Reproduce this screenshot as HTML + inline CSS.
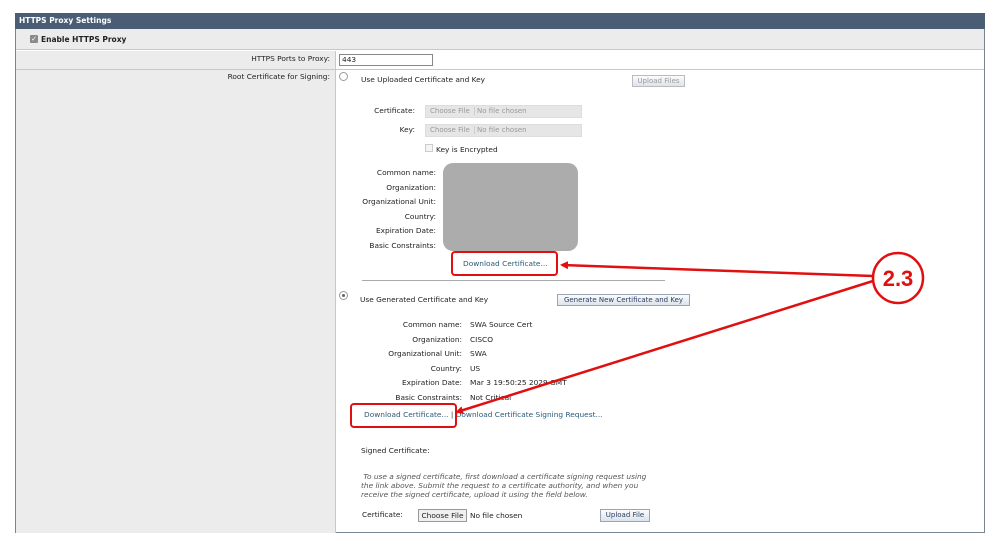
<!DOCTYPE html>
<html><head><meta charset="utf-8"><style>
*{margin:0;padding:0;box-sizing:border-box}
body{width:999px;height:543px;background:#fff;position:relative;font-family:"DejaVu Sans","Liberation Sans",sans-serif;font-size:7.4px;color:#222;overflow:hidden}
.a{position:absolute;white-space:nowrap}
.r{text-align:right}
.lnk{color:#2a5a78}
.fb{position:absolute;height:13px;background:#e6e6e6;border:1px solid #ddd;color:#999;font-size:7px;line-height:11px}
.btn{position:absolute;height:12px;border:1px solid #9aa4b4;background:linear-gradient(#fafbfd,#dde3ec);font-size:7px;line-height:10px;text-align:center;color:#2a3f5f}
</style></head><body>
<div class="a" style="left:15px;top:13px;width:970px;height:520px;border:1px solid #7a8594;border-top:none"></div>
<div class="a" style="left:15px;top:13px;width:970px;height:16px;background:#4a5d75;color:#fff;font-weight:bold;font-size:7.5px;line-height:16px;padding-left:4px">HTTPS Proxy Settings</div>
<div class="a" style="left:16px;top:29px;width:968px;height:21px;background:#ececec;border-bottom:1px solid #c8c8c8"></div>
<div class="a" style="left:30px;top:35px;width:8px;height:8px;background:#8a8a8a;border-radius:1px;color:#fff;font-size:7px;line-height:8px;text-align:center">✓</div>
<div class="a" style="left:41px;top:35px;font-weight:bold;font-size:7.5px">Enable HTTPS Proxy</div>
<div class="a" style="left:16px;top:51px;width:319px;height:482px;background:#ececec"></div>
<div class="a" style="left:335px;top:51px;width:1px;height:482px;background:#c8c8c8"></div>
<div class="a" style="left:16px;top:69px;width:968px;height:1px;background:#c8c8c8"></div>
<div class="a r" style="left:100px;top:54px;width:230px">HTTPS Ports to Proxy:</div>
<div class="a" style="left:339px;top:54px;width:94px;height:12px;border:1px solid #888;background:#fff;padding-left:2px;line-height:10px">443</div>
<div class="a r" style="left:100px;top:72px;width:230px">Root Certificate for Signing:</div>
<div class="a" style="left:339px;top:72px;width:9px;height:9px;border:1px solid #999;border-radius:50%;background:#fff"></div>
<div class="a" style="left:361px;top:75px">Use Uploaded Certificate and Key</div>
<div class="btn" style="left:632px;top:75px;width:53px;color:#999;border-color:#bbb">Upload Files</div>
<div class="a r" style="left:330px;top:106px;width:85px">Certificate:</div>
<div class="fb" style="left:425px;top:105px;width:157px"><span style="padding:0 4px;border-right:1px solid #ccc">Choose File</span> No file chosen</div>
<div class="a r" style="left:330px;top:125px;width:85px">Key:</div>
<div class="fb" style="left:425px;top:124px;width:157px"><span style="padding:0 4px;border-right:1px solid #ccc">Choose File</span> No file chosen</div>
<div class="a" style="left:425px;top:144px;width:8px;height:8px;border:1px solid #ccc;background:#f4f4f4"></div>
<div class="a" style="left:436px;top:145px">Key is Encrypted</div>
<div class="a r" style="left:300px;top:166px;width:136px;line-height:14.5px">Common name:<br>Organization:<br>Organizational Unit:<br>Country:<br>Expiration Date:<br>Basic Constraints:</div>
<div class="a" style="left:443px;top:163px;width:135px;height:88px;background:#acacac;border-radius:10px"></div>
<div class="a lnk" style="left:463px;top:259px">Download Certificate...</div>
<div class="a" style="left:362px;top:280px;width:303px;height:1px;background:#aaa"></div>
<div class="a" style="left:339px;top:291px;width:9px;height:9px;border:1px solid #999;border-radius:50%;background:#fff"><div style="margin:2px;width:3px;height:3px;border-radius:50%;background:#666"></div></div>
<div class="a" style="left:360px;top:295px">Use Generated Certificate and Key</div>
<div class="btn" style="left:557px;top:294px;width:133px">Generate New Certificate and Key</div>
<div class="a r" style="left:330px;top:318px;width:132px;line-height:14.5px">Common name:<br>Organization:<br>Organizational Unit:<br>Country:<br>Expiration Date:<br>Basic Constraints:</div>
<div class="a" style="left:470px;top:318px;line-height:14.5px">SWA Source Cert<br>CISCO<br>SWA<br>US<br>Mar 3 19:50:25 2029 GMT<br>Not Critical</div>
<div class="a lnk" style="left:364px;top:410px">Download Certificate... <span style="color:#333">|</span> Download Certificate Signing Request...</div>
<div class="a" style="left:361px;top:446px">Signed Certificate:</div>
<div class="a" style="left:361px;top:472px;font-style:italic;color:#555;line-height:9px">&nbsp;To use a signed certificate, first download a certificate signing request using<br>the link above. Submit the request to a certificate authority, and when you<br>receive the signed certificate, upload it using the field below.</div>
<div class="a" style="left:362px;top:510px">Certificate:</div>
<div class="a" style="left:418px;top:509px;width:49px;height:13px;border:1px solid #999;background:#f0f0f0;text-align:center;line-height:11px">Choose File</div>
<div class="a" style="left:470px;top:511px">No file chosen</div>
<div class="btn" style="left:600px;top:509px;width:50px;height:13px">Upload File</div>
<div class="a" style="left:451px;top:251px;width:107px;height:25px;border:2.5px solid #e01010;border-radius:4px"></div>
<div class="a" style="left:350px;top:403px;width:107px;height:25px;border:2.5px solid #e01010;border-radius:4px"></div>
<svg class="a" style="left:0;top:0" width="999" height="543">
<defs><marker id="m" markerWidth="8" markerHeight="8" refX="6" refY="4" orient="auto" markerUnits="userSpaceOnUse"><path d="M0,0 L8,4 L0,8 z" fill="#e01010"/></marker></defs>
<line x1="873" y1="276" x2="562" y2="265" stroke="#e01010" stroke-width="2.5" marker-end="url(#m)"/>
<line x1="873" y1="281" x2="457" y2="412" stroke="#e01010" stroke-width="2.5" marker-end="url(#m)"/>
<circle cx="898" cy="278" r="25" fill="#fff" stroke="#e01010" stroke-width="2.5"/>
<text x="898" y="286" text-anchor="middle" font-family="Liberation Sans,sans-serif" font-weight="bold" font-size="22" fill="#e01010">2.3</text>
</svg>
</body></html>
